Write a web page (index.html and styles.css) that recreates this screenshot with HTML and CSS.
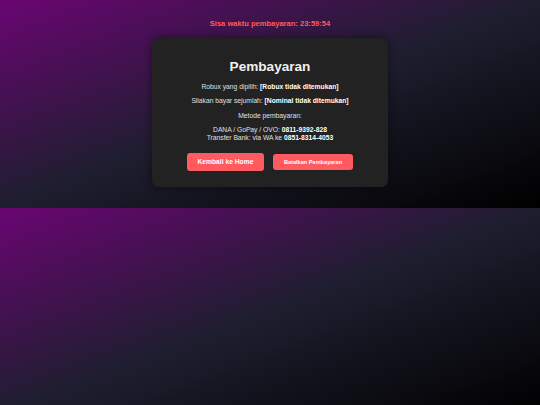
FILE: index.html
```html
<!DOCTYPE html>
<html lang="id">
<head>
<meta charset="utf-8">
<title>Pembayaran</title>
<link rel="stylesheet" href="styles.css">
</head>
<body>
<p class="timer">Sisa waktu pembayaran: 23:59:54</p>
<div class="card">
  <h2 class="title">Pembayaran</h2>
  <p class="line">Robux yang dipilih: <b>[Robux tidak ditemukan]</b></p>
  <p class="line">Silakan bayar sejumlah: <b>[Nominal tidak ditemukan]</b></p>
  <p class="line">Metode pembayaran:</p>
  <p class="line">DANA / GoPay / OVO: <b>0811-9392-828</b><br>Transfer Bank: via WA ke <b>0851-8314-4053</b></p>
  <div class="actions">
    <a class="btn btn-home" href="#">Kembali ke Home</a>
    <button class="btn btn-cancel" type="button">Batalkan Pembayaran</button>
  </div>
</div>
</body>
</html>
```
FILE: styles.css
```css
html {
  margin: 0;
}
body {
  margin: 0;
  padding: 18.5px 0 21px;
  font-family: "Liberation Sans", Arial, sans-serif;
  font-size: 6.72px;
  color: #e0e0e0;
  background: linear-gradient(to bottom right, #6a0572, #1e1e2f, #000000);
  text-align: center;
}
.timer {
  margin: 0 0 10.5px;
  font-size: 7.56px;
  font-weight: bold;
  color: #ff5a5f;
  line-height: 9px;
}
.card {
  width: 236px;
  box-sizing: border-box;
  margin: 0 auto;
  padding: 20.5px 12px 16px;
  background: #222222;
  border-radius: 7px;
  box-shadow: 0 0 10px rgba(0, 0, 0, 0.45);
}
.title {
  margin: 0 0 8px;
  font-size: 13.6px;
  line-height: 16px;
  color: #f0f0f0;
}
.line {
  margin: 0 0 6.5px;
  line-height: 8px;
}
.line b {
  color: #ffffff;
}
.actions {
  display: flex;
  justify-content: center;
  align-items: center;
  gap: 9px;
  margin-top: 11px;
}
.btn {
  display: inline-block;
  border: none;
  background: #ff5a5f;
  color: #ffffff;
  font-family: "Liberation Sans", Arial, sans-serif;
  font-weight: bold;
  text-decoration: none;
  border-radius: 3px;
  padding: 5px 10.5px;
  cursor: pointer;
}
.btn-home {
  font-size: 6.72px;
  line-height: 7.7px;
}
.btn-cancel {
  font-size: 5.6px;
  line-height: 6.4px;
  padding: 4.8px 11px;
}
```
